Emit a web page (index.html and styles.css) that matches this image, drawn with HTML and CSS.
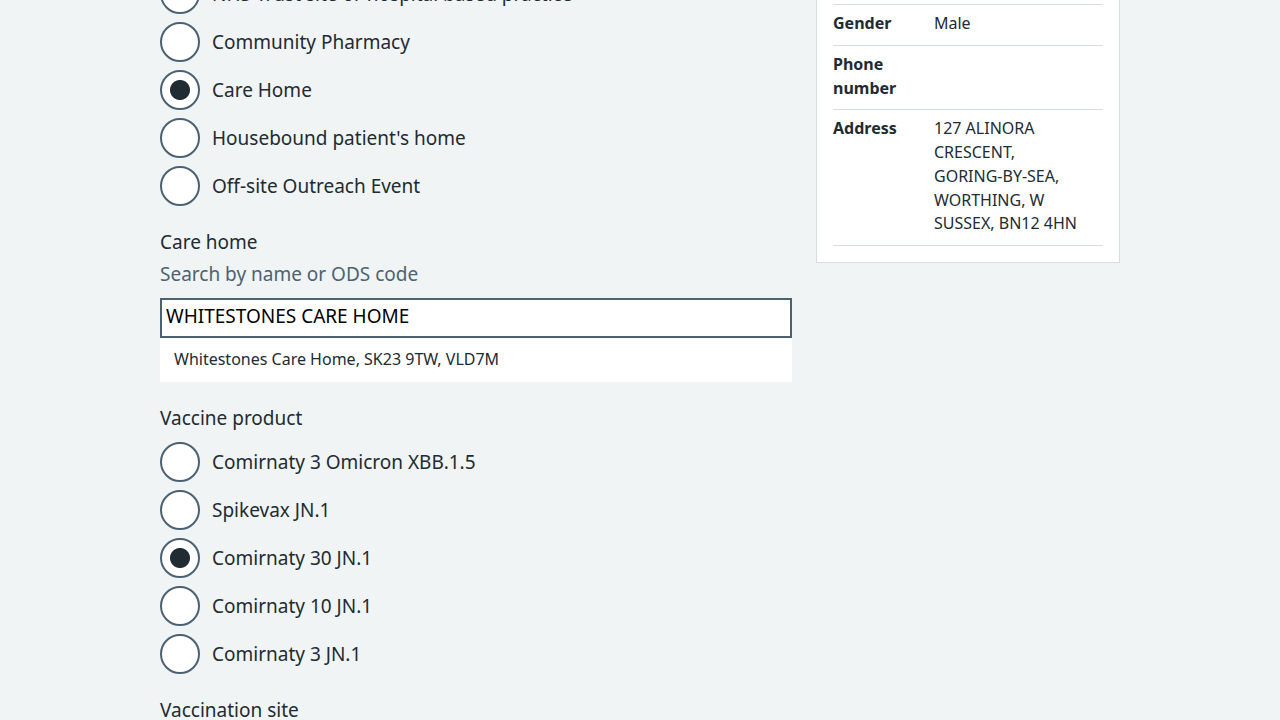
FILE: index.html
```html
<!DOCTYPE html>
<html lang="en">
<head>
<meta charset="utf-8">
<title>Record a vaccination</title>
<link rel="stylesheet" href="styles.css">
</head>
<body>
<main class="page">
  <div class="layout">
    <div class="col-main">
      <fieldset class="group">
        <legend class="legend">Vaccination setting</legend>
        <div class="hint hint-tight">Select where the vaccination was given</div>
        <div class="radios">
          <label class="radio"><input class="radio-input" type="radio" name="setting"><span class="radio-label">Vaccination centre</span></label>
          <label class="radio"><input class="radio-input" type="radio" name="setting"><span class="radio-label">NHS Trust site or hospital based practice</span></label>
          <label class="radio"><input class="radio-input" type="radio" name="setting"><span class="radio-label">Community Pharmacy</span></label>
          <label class="radio"><input class="radio-input" type="radio" name="setting" checked><span class="radio-label">Care Home</span></label>
          <label class="radio"><input class="radio-input" type="radio" name="setting"><span class="radio-label">Housebound patient's home</span></label>
          <label class="radio"><input class="radio-input" type="radio" name="setting"><span class="radio-label">Off-site Outreach Event</span></label>
        </div>
      </fieldset>

      <div class="group">
        <label class="label" for="care-home">Care home</label>
        <div class="hint">Search by name or ODS code</div>
        <div class="autocomplete">
          <input class="text-input" id="care-home" type="text" value="WHITESTONES CARE HOME">
          <ul class="listbox">
            <li class="option">Whitestones Care Home, SK23 9TW, VLD7M</li>
          </ul>
        </div>
      </div>

      <fieldset class="group">
        <legend class="legend legend-gap">Vaccine product</legend>
        <div class="radios">
          <label class="radio"><input class="radio-input" type="radio" name="product"><span class="radio-label">Comirnaty 3 Omicron XBB.1.5</span></label>
          <label class="radio"><input class="radio-input" type="radio" name="product"><span class="radio-label">Spikevax JN.1</span></label>
          <label class="radio"><input class="radio-input" type="radio" name="product" checked><span class="radio-label">Comirnaty 30 JN.1</span></label>
          <label class="radio"><input class="radio-input" type="radio" name="product"><span class="radio-label">Comirnaty 10 JN.1</span></label>
          <label class="radio"><input class="radio-input" type="radio" name="product"><span class="radio-label">Comirnaty 3 JN.1</span></label>
        </div>
      </fieldset>

      <fieldset class="group">
        <legend class="legend legend-gap">Vaccination site</legend>
        <div class="radios">
          <label class="radio"><input class="radio-input" type="radio" name="site"><span class="radio-label">Left arm</span></label>
          <label class="radio"><input class="radio-input" type="radio" name="site"><span class="radio-label">Right arm</span></label>
        </div>
      </fieldset>
    </div>

    <aside class="col-side">
      <div class="card">
        <dl class="summary">
          <div class="row"><dt class="key">Name</dt><dd class="value">John Smith</dd></div>
          <div class="row"><dt class="key">Age</dt><dd class="value">74</dd></div>
          <div class="row"><dt class="key">Born</dt><dd class="value">1 March 1950</dd></div>
          <div class="row"><dt class="key">Gender</dt><dd class="value">Male</dd></div>
          <div class="row"><dt class="key">Phone number</dt><dd class="value"></dd></div>
          <div class="row"><dt class="key">Address</dt><dd class="value">127 ALINORA CRESCENT, GORING-BY-SEA, WORTHING, W SUSSEX, BN12 4HN</dd></div>
        </dl>
      </div>
    </aside>
  </div>
</main>
</body>
</html>
```

FILE: styles.css
```css
* {
  box-sizing: border-box;
}

body {
  margin: 0;
  background: #f0f4f5;
  color: #212b32;
  font-family: "Noto Sans", "Open Sans", Arial, sans-serif;
}

.page {
  margin-top: -134.25px;
}

.layout {
  width: 960px;
  margin: 0 auto;
  display: flex;
  align-items: flex-start;
  gap: 24px;
}

.col-main {
  width: 632px;
}

.col-side {
  width: 304px;
}

/* form groups */
.group {
  border: 0;
  margin: 0 0 22px;
  padding: 0;
  min-width: 0;
}

.legend,
.label {
  display: block;
  padding: 0;
  font-size: 19px;
  line-height: 28px;
  margin: 0 0 4px;
}

.legend-gap {
  margin-bottom: 10px;
}

.hint {
  color: #4c6272;
  font-size: 19px;
  line-height: 28px;
  margin: 0 0 10px;
}

.hint-tight {
  margin-bottom: 0;
}

/* radios */
.radios {
  display: flex;
  flex-direction: column;
  gap: 8px;
}

.radio {
  display: flex;
  align-items: center;
  gap: 12px;
  height: 40px;
}

.radio-input {
  appearance: none;
  -webkit-appearance: none;
  margin: 0;
  flex: 0 0 40px;
  width: 40px;
  height: 40px;
  border: 2px solid #4c6272;
  border-radius: 50%;
  background: #ffffff;
}

.radio-input:checked {
  background: radial-gradient(circle, #212b32 0 9.5px, #ffffff 10.5px);
}

.radio-label {
  font-size: 19px;
  line-height: 28px;
}

/* autocomplete */
.autocomplete {
  width: 632px;
}

.text-input {
  display: block;
  width: 100%;
  height: 40px;
  margin: 0;
  padding: 1px 4px 5px;
  border: 2px solid #4c6272;
  border-radius: 0;
  background: #ffffff;
  color: #000000;
  font-family: inherit;
  font-size: 19px;
  line-height: 28px;
}

.listbox {
  list-style: none;
  margin: 0;
  padding: 0;
  background: #ffffff;
}

.option {
  padding: 9px 14px 11px;
  font-size: 16px;
  line-height: 24px;
}

/* summary card */
.card {
  background: #ffffff;
  border: 1px solid #d8dde0;
  padding: 16px;
}

.summary {
  margin: 0;
}

.row {
  display: grid;
  grid-template-columns: 101px 150px;
  padding: 7px 0 9px;
  border-bottom: 1px solid #d8dde0;
  font-size: 16px;
  line-height: 23.75px;
}

.key {
  font-weight: 700;
  padding-right: 20px;
}

.value {
  margin: 0;
}
```
